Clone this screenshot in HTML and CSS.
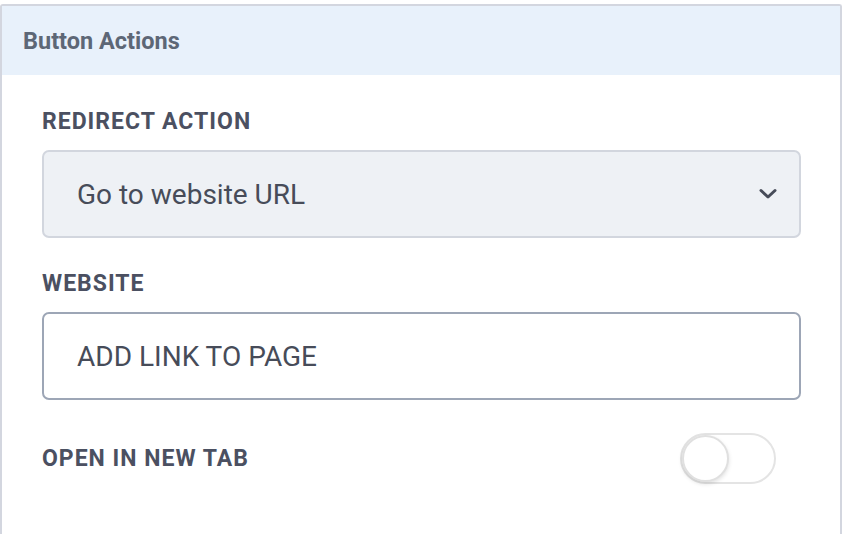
FILE: index.html
```html
<!DOCTYPE html>
<html>
<head>
<meta charset="utf-8">
<link rel="stylesheet" href="styles.css">
</head>
<body>
<div class="panel">
  <div class="panel-header">Button Actions</div>
  <div class="panel-body">
    <div class="field">
      <label class="label">Redirect Action</label>
      <div class="select">
        <span class="select-text">Go to website URL</span>
        <svg class="chevron" width="18" height="12" viewBox="0 0 18 12"><path d="M2 2.5 L9 9 L16 2.5" fill="none" stroke="#474c59" stroke-width="3" stroke-linecap="round" stroke-linejoin="round"/></svg>
      </div>
    </div>
    <div class="field">
      <label class="label">Website</label>
      <div class="input">ADD LINK TO PAGE</div>
    </div>
    <div class="toggle-row">
      <label class="label">Open in new tab</label>
      <div class="toggle"><div class="knob"></div></div>
    </div>
  </div>
</div>
</body>
</html>
```
FILE: styles.css
```css
* { box-sizing: border-box; }
html, body { margin: 0; padding: 0; background: #ffffff; }
body {
  font-family: Roboto, "Liberation Sans", sans-serif;
  padding-top: 4px;
  width: 856px;
  height: 534px;
  overflow: hidden;
}
.panel {
  width: 842px;
  height: 560px;
  border: 2px solid #d3d6df;
  border-bottom: none;
  border-radius: 3px 3px 0 0;
}
.panel-header {
  height: 69px;
  background: #e8f1fb;
  color: #5d6776;
  font-weight: 700;
  font-size: 23.5px;
  padding-left: 21px;
  display: flex;
  align-items: center;
}
.panel-body {
  padding: 34px 39px 0 40px;
}
.field { margin-bottom: 33px; }
.label {
  display: block;
  color: #4b5061;
  font-weight: 700;
  font-size: 23px;
  letter-spacing: 1px;
  text-transform: uppercase;
  line-height: 26px;
  margin-bottom: 15px;
}
.select {
  height: 88px;
  background: #eef1f5;
  border: 2px solid #d2d6de;
  border-radius: 7px;
  display: flex;
  align-items: center;
  justify-content: space-between;
  padding: 0 22px 0 33px;
  color: #474c59;
  font-size: 28px;
}
.input {
  height: 88px;
  background: #fff;
  border: 2px solid #9da6b6;
  border-radius: 7px;
  display: flex;
  align-items: center;
  padding: 0 33px;
  color: #474c59;
  font-size: 28px;
}
.toggle-row {
  display: flex;
  align-items: center;
  justify-content: space-between;
  padding-right: 25px;
  margin-top: 3px;
}
.toggle-row .label { margin-bottom: 0; }
.toggle {
  width: 96px;
  height: 51px;
  border: 2px solid #e4e4e4;
  border-radius: 26px;
  background: #fff;
  position: relative;
}
.knob {
  position: absolute;
  left: 0;
  top: 0;
  width: 47px;
  height: 47px;
  border-radius: 50%;
  background: #fff;
  border: 2px solid #e0e0e0;
  box-shadow: 0 2px 4px rgba(0,0,0,0.12);
}
```
